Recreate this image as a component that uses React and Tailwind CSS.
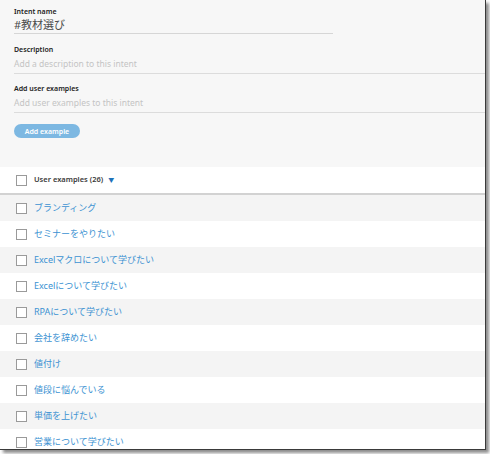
import React from 'react';

const examples = [
  'ブランディング',
  'セミナーをやりたい',
  'Excelマクロについて学びたい',
  'Excelについて学びたい',
  'RPAについて学びたい',
  '会社を辞めたい',
  '値付け',
  '値段に悩んでいる',
  '単価を上げたい',
  '営業について学びたい',
];

const font = { fontFamily: '"Noto Sans", "Noto Sans CJK JP", sans-serif' };

function Checkbox() {
  return <span className="block h-[11px] w-[11px] shrink-0 border border-[#9a9a9a] bg-white" />;
}

export default function App() {
  return (
    <div className="h-[454px] w-[490px] bg-white" style={font}>
      <div className="h-[450px] w-[486px] overflow-hidden border-r border-b border-[#3a3a3a] bg-white shadow-[3px_3px_3px_rgba(0,0,0,0.45)]">
        {/* Intent form */}
        <div className="h-[167px] bg-[#f7f7f7] pl-[14px] pt-[5px]">
          <div className="h-[13px] text-[7px] leading-[13px] font-semibold text-[#222]">Intent name</div>
          <div className="h-[16px] w-[319px] border-b border-[#d6d6d6] text-[11px] leading-[13px] text-[#4a4a4a]">#教材選び</div>

          <div className="mt-[10px] h-[12px] text-[7px] leading-[12px] font-semibold text-[#222]">Description</div>
          <div className="h-[18px] border-b border-[#dcdcdc] text-[8.5px] leading-[15px] text-[#c4c4c4]">Add a description to this intent</div>

          <div className="mt-[9px] h-[12px] text-[7px] leading-[12px] font-semibold text-[#222]">Add user examples</div>
          <div className="h-[18px] border-b border-[#dcdcdc] text-[8.5px] leading-[15px] text-[#c4c4c4]">Add user examples to this intent</div>

          <button className="mt-[11px] flex h-[14px] w-[66px] items-center justify-center rounded-full bg-[#7db8e2] text-[7px] leading-none font-semibold text-white">
            Add example
          </button>
        </div>

        {/* Examples list */}
        <div className="flex h-[28px] items-center border-b-2 border-[#d2d2d2] bg-white pl-[16px]">
          <Checkbox />
          <span className="ml-[7px] text-[7.5px] font-semibold text-[#3a3a3a]">User examples (26)</span>
          <span className="ml-[5px] text-[6px] text-[#1f72b8]">▼</span>
        </div>
        {examples.map((ex, i) => (
          <div
            key={ex}
            className={`flex h-[26px] items-center gap-[7px] pl-[16px] ${i % 2 === 0 ? 'bg-[#f4f4f4]' : 'bg-white'}`}
          >
            <Checkbox />
            <span className="text-[9px] text-[#3c92d2]">{ex}</span>
          </div>
        ))}
      </div>
    </div>
  );
}
